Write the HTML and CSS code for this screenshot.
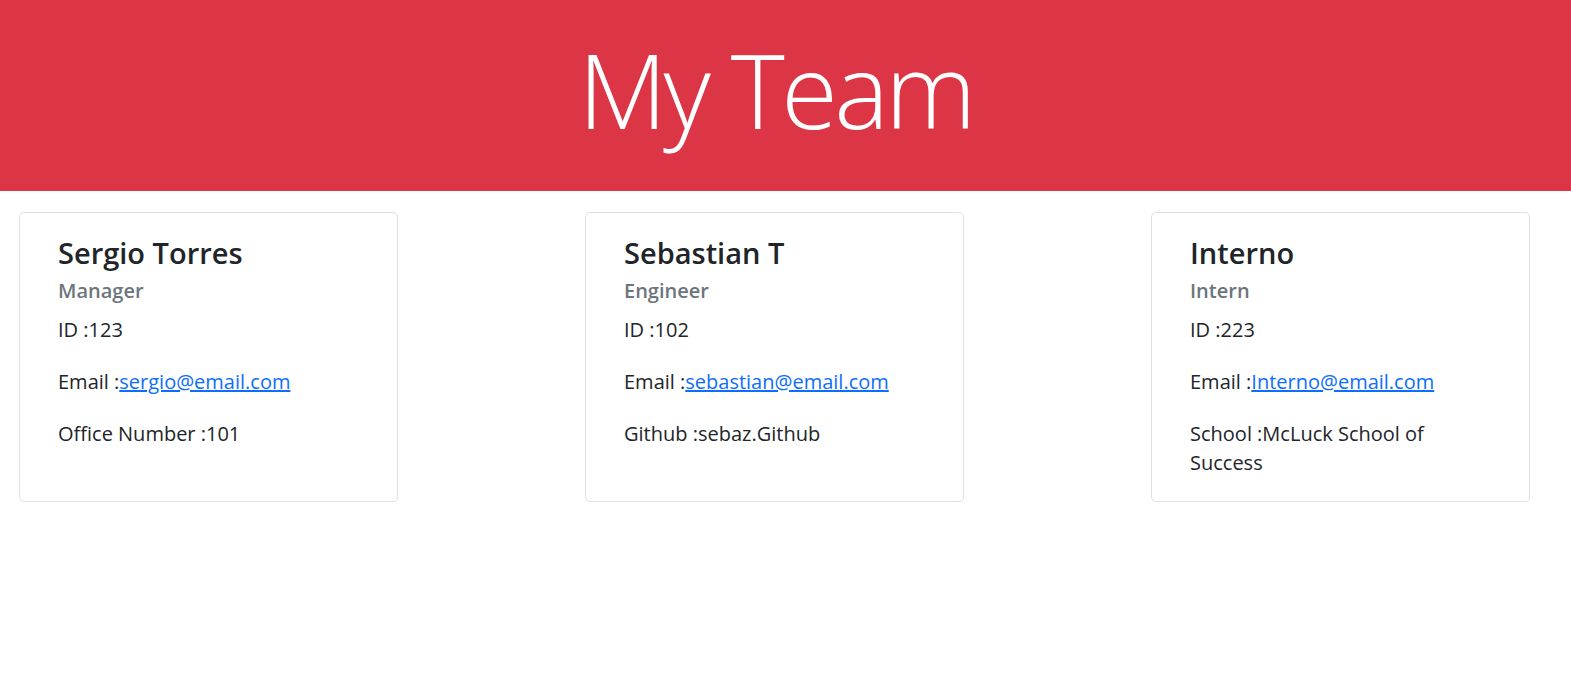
FILE: index.html
```html
<!DOCTYPE html>
<html lang="en">
<head>
<meta charset="utf-8">
<title>My Team</title>
<link rel="stylesheet" href="styles.css">
</head>
<body>
<header class="hero">
  <h1 class="hero-title">My Team</h1>
</header>
<main class="team">
  <section class="card">
    <h3 class="card-title">Sergio Torres</h3>
    <h5 class="card-subtitle">Manager</h5>
    <p class="card-text">ID :123</p>
    <p class="card-text">Email :<a href="#">sergio@email.com</a></p>
    <p class="card-text">Office Number :101</p>
  </section>
  <section class="card">
    <h3 class="card-title">Sebastian T</h3>
    <h5 class="card-subtitle">Engineer</h5>
    <p class="card-text">ID :102</p>
    <p class="card-text">Email :<a href="#">sebastian@email.com</a></p>
    <p class="card-text">Github :sebaz.Github</p>
  </section>
  <section class="card">
    <h3 class="card-title">Interno</h3>
    <h5 class="card-subtitle">Intern</h5>
    <p class="card-text">ID :223</p>
    <p class="card-text">Email :<a href="#">Interno@email.com</a></p>
    <p class="card-text">School :McLuck School of Success</p>
  </section>
</main>
</body>
</html>
```
FILE: styles.css
```css
* { box-sizing: border-box; }
html, body { margin: 0; padding: 0; }
body {
  font-family: "Open Sans", "Noto Sans", "Liberation Sans", sans-serif;
  color: #212529;
  background: #fff;
}
.hero {
  background: #dc3545;
  height: 191px;
  display: flex;
  align-items: center;
  justify-content: center;
  padding: 0 20px 13px 0;
}
.hero-title {
  margin: 0;
  color: #fff;
  font-weight: 300;
  font-size: 103px;
  letter-spacing: -3.5px;
  line-height: 1;
}
.team {
  display: flex;
  align-items: flex-start;
  gap: 187px;
  padding: 21px 0 0 19px;
}
.card {
  width: 379px;
  height: 290px;
  border: 1px solid #dfdfdf;
  border-radius: 5px;
  padding: 23px 38px 0 38px;
}
.card-title {
  margin: 0;
  font-size: 29px;
  font-weight: 600;
  line-height: 1.2;
}
.card-subtitle {
  margin: 8px 0 12px;
  font-size: 20px;
  font-weight: 600;
  color: #6c757d;
  line-height: 24px;
}
.card-text {
  margin: 0 0 23px;
  font-size: 20px;
  line-height: 29px;
}
.card-text a { color: #0d6efd; }
```
